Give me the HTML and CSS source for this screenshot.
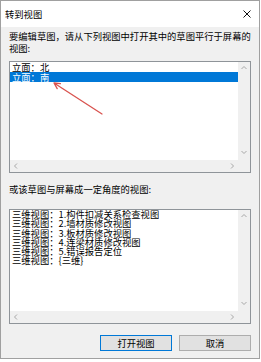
FILE: index.html
```
<!DOCTYPE html>
<html lang="zh-CN">
<head>
  <meta charset="UTF-8">
  <title>转到视图</title>
  <link rel="stylesheet" href="styles.css">
</head>
<body>

  <div class="fenetre">
    <div class="barre-titre">
      <span class="titre">转到视图</span>
      <svg class="fermer" width="10" height="10" viewBox="0 0 10 10">
        <path d="M1.5 1.5 L8.5 8.5 M8.5 1.5 L1.5 8.5" stroke="#111" stroke-width="1" fill="none"/>
      </svg>
    </div>

    <div class="contenu">
      <p class="libelle">要编辑草图，请从下列视图中打开其中的草图平行于屏幕的<br>视图:</p>

      <div class="liste liste-haut">
        <ul class="elements">
          <li>立面：北</li>
          <li class="choisi">立面：南</li>
        </ul>
        <div class="defil-v">
          <svg width="12" height="12" viewBox="0 0 12 12"><path d="M3.5 7 L6 4.5 L8.5 7" stroke="#a8a8a8" fill="none"/></svg>
          <svg width="12" height="12" viewBox="0 0 12 12"><path d="M3.5 5 L6 7.5 L8.5 5" stroke="#a8a8a8" fill="none"/></svg>
        </div>
        <div class="defil-h">
          <svg width="12" height="12" viewBox="0 0 12 12"><path d="M7 3.5 L4.5 6 L7 8.5" stroke="#a8a8a8" fill="none"/></svg>
          <svg width="12" height="12" viewBox="0 0 12 12"><path d="M5 3.5 L7.5 6 L5 8.5" stroke="#a8a8a8" fill="none"/></svg>
        </div>
        <div class="coin"></div>
      </div>

      <p class="libelle libelle-deux">或该草图与屏幕成一定角度的视图:</p>

      <div class="liste liste-bas">
        <ul class="elements">
          <li>三维视图：1.构件扣减关系检查视图</li>
          <li>三维视图：2.墙材质修改视图</li>
          <li>三维视图：3.板材质修改视图</li>
          <li>三维视图：4.连梁材质修改视图</li>
          <li>三维视图：5.错误报告定位</li>
          <li>三维视图：{三维}</li>
        </ul>
        <div class="defil-v">
          <svg width="12" height="12" viewBox="0 0 12 12"><path d="M3.5 7 L6 4.5 L8.5 7" stroke="#a8a8a8" fill="none"/></svg>
          <svg width="12" height="12" viewBox="0 0 12 12"><path d="M3.5 5 L6 7.5 L8.5 5" stroke="#a8a8a8" fill="none"/></svg>
        </div>
        <div class="defil-h">
          <svg width="12" height="12" viewBox="0 0 12 12"><path d="M7 3.5 L4.5 6 L7 8.5" stroke="#a8a8a8" fill="none"/></svg>
          <svg width="12" height="12" viewBox="0 0 12 12"><path d="M5 3.5 L7.5 6 L5 8.5" stroke="#a8a8a8" fill="none"/></svg>
        </div>
        <div class="coin"></div>
      </div>

      <div class="boutons">
        <button class="bouton bouton-defaut">打开视图</button>
        <button class="bouton">取消</button>
      </div>
    </div>

    <!-- fleche rouge d'annotation -->
    <svg class="fleche" width="261" height="362" viewBox="0 0 261 362">
      <path d="M102 114 L54 83 M54 83 L57.2 88.6 M54 83 L60.4 83.6" stroke="#d9534f" stroke-width="1.3" fill="none" stroke-linecap="round"/>
    </svg>
  </div>

</body>
</html>
```

FILE: styles.css
```
body {
  margin: 0;
  background: #fff;
  font-family: "Noto Sans CJK SC", "Noto Sans", sans-serif;
  color: #000;
}

.fenetre {
  position: relative;
  box-sizing: border-box;
  width: 260px;
  height: 359px;
  border: 1px solid #a0a0a0;
  background: #f0f0f0;
  display: flex;
  flex-direction: column;
}

.barre-titre {
  height: 26px;
  background: #fff;
  display: flex;
  align-items: center;
  justify-content: space-between;
  padding: 0 7px 0 4px;
}

.titre {
  font-size: 9.3px;
  line-height: 12px;
}

.fermer {
  display: block;
}

.contenu {
  padding: 3px 8px 0 8px;
  display: flex;
  flex-direction: column;
}

.libelle {
  margin: 0;
  font-size: 9.3px;
  line-height: 12px;
  white-space: nowrap;
}

.libelle-deux {
  margin-top: 10px;
}

.liste {
  box-sizing: border-box;
  border: 1px solid #8f9499;
  display: grid;
  grid-template-columns: 1fr 12px;
  grid-template-rows: 1fr 12px;
}

.liste-haut {
  height: 112px;
  margin-top: 7px;
}

.liste-bas {
  height: 115px;
  margin-top: 14px;
}

.elements {
  list-style: none;
  margin: 0;
  padding: 0;
  background: #fff;
  font-size: 9.3px;
  white-space: nowrap;
  overflow: hidden;
}

.elements li {
  padding-left: 2px;
  height: 10px;
  line-height: 10px;
}

.liste-bas .elements li {
  height: 9.3px;
  line-height: 9.3px;
}

.elements li.choisi {
  background: #0078d7;
  color: #fff;
}

.defil-v {
  background: #f0f0f0;
  display: flex;
  flex-direction: column;
  justify-content: space-between;
  padding-bottom: 2px;
}

.defil-h {
  background: #f0f0f0;
  display: flex;
  justify-content: space-between;
}

.defil-v svg, .defil-h svg {
  display: block;
}

.coin {
  background: #f0f0f0;
}

.boutons {
  display: flex;
  justify-content: flex-end;
  gap: 7px;
  margin-top: 11px;
}

.bouton {
  box-sizing: border-box;
  width: 72px;
  height: 16px;
  padding: 0;
  background: #e1e1e1;
  border: 1px solid #adadad;
  font-family: inherit;
  font-size: 9.3px;
  line-height: 14px;
  color: #000;
}

.bouton-defaut {
  border-color: #0078d7;
}

.fleche {
  position: absolute;
  left: -1px;
  top: -1px;
  pointer-events: none;
}
```
